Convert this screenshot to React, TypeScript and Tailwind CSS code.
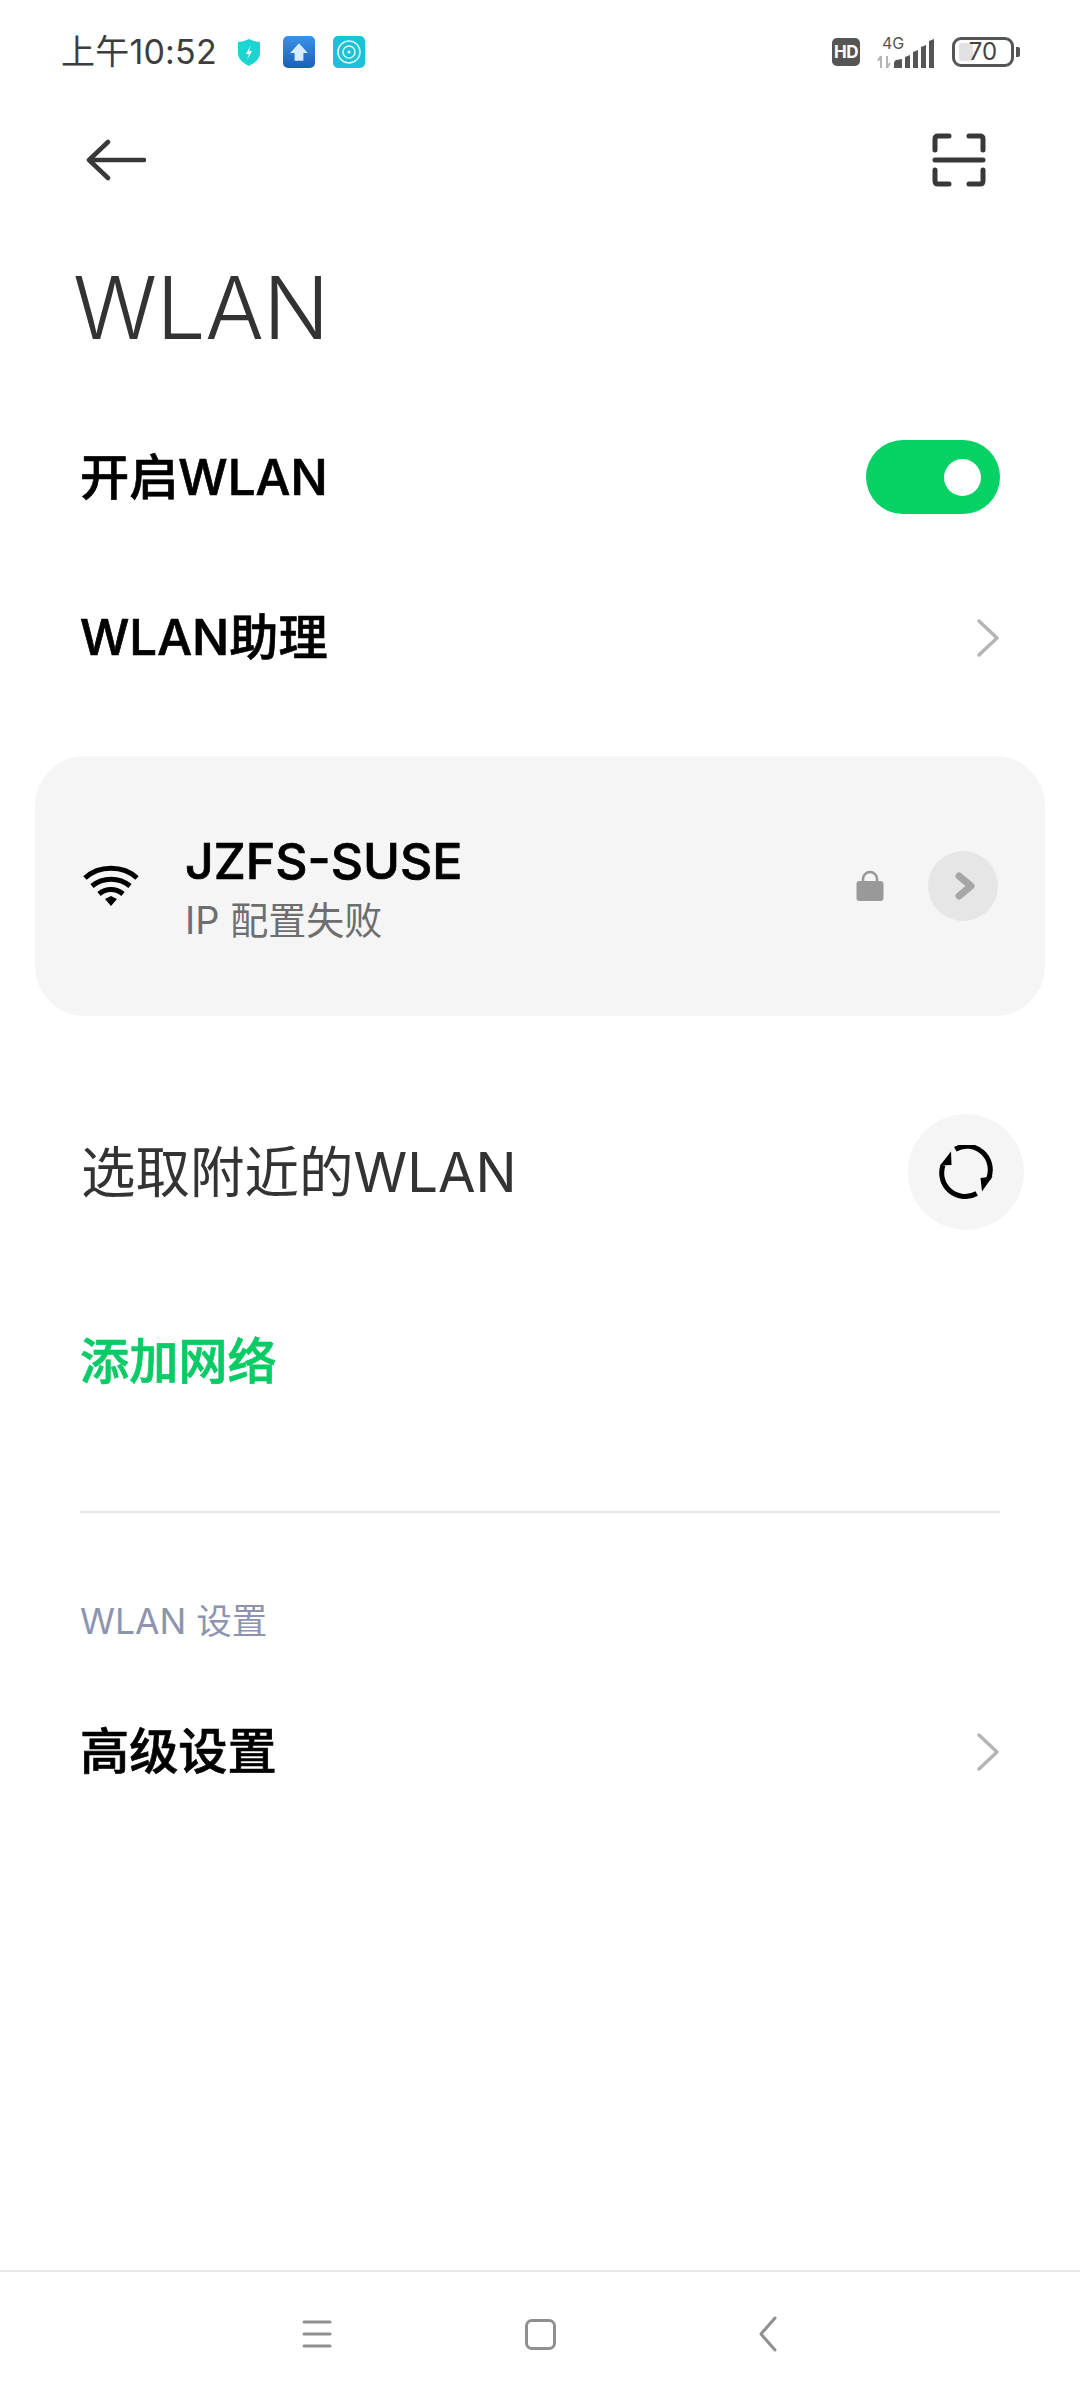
import * as React from "react"

const FONT = "font-['Inter','Noto_Sans_CJK_SC',sans-serif]"

function Chevron() {
  return (
    <svg width="24" height="38" viewBox="0 0 24 38" fill="none" stroke="#b5b5b5" strokeWidth="3.5" strokeLinecap="round" strokeLinejoin="round">
      <path d="M3 2l18 17L3 36" />
    </svg>
  )
}

function StatusBar() {
  return (
    <div className="flex h-[104px] shrink-0 items-center justify-between pl-[61px] pr-[60px]">
      <div className="flex items-center">
        <span className="w-[172px] text-[34px] leading-none tracking-[0.2px] text-[#3d3d3d]">上午10:52</span>
        <svg width="32" height="32" viewBox="0 0 32 32" className="mr-[18px]">
          <path d="M16 3c4 2 8 3 11 3v11c0 6-5 10-11 13C10 27 5 23 5 17V6c3 0 7-1 11-3z" fill="#1cd4d4" />
          <path d="M18 9l-5 9h3l-2 6 5-9h-3z" fill="#fff" />
        </svg>
        <div className="mr-[18px] flex size-8 items-center justify-center rounded-[5px] bg-gradient-to-b from-[#3a93e8] to-[#1b5fb8]">
          <svg width="22" height="22" viewBox="0 0 20 20">
            <path d="M10 2l8 9h-4v7H6v-7H2z" fill="#d6ecff" />
          </svg>
        </div>
        <div className="flex size-8 items-center justify-center rounded-[5px] bg-[#1bc1d4]">
          <svg width="28" height="28" viewBox="0 0 28 28" fill="none" stroke="#d9f6fa" strokeWidth="1.6">
            <circle cx="14" cy="14" r="11" />
            <circle cx="14" cy="14" r="6" />
            <circle cx="14" cy="14" r="1.6" fill="#d9f6fa" stroke="none" />
          </svg>
        </div>
      </div>
      <div className="flex items-center">
        <div className="mr-[14px] flex h-7 w-7 items-center justify-center rounded-[5px] bg-[#555] text-[17px] font-bold leading-none tracking-[-0.5px] text-white">
          HD
        </div>
        <div className="relative mr-[16px] h-[36px] w-[62px]">
          <span className="absolute left-[8px] top-[1px] text-[16px] leading-none text-[#555]">4G</span>
          <svg width="62" height="36" viewBox="0 0 62 36" className="block">
            <path d="M7 34V22M7 22l-3 5M13 22v12M13 34l3-5" stroke="#b5b5b5" strokeWidth="2" fill="none" />
            <path d="M20 34v-5q0-2 2-3l6-1v9zM31 34V23l5-2v13zM39 34V18l5-2v18zM47 34V13l5-2v23zM55 34V7l5-2v29z" fill="#555" />
          </svg>
        </div>
        <div className="relative flex h-[30px] w-[62px] items-center justify-center rounded-[9px] border-[3px] border-[#555]">
          <div className="absolute bottom-[3px] left-[4px] top-[3px] w-[14px] rounded-[2px] bg-[#e2e2e2]" />
          <span className="relative text-[24px] leading-none text-[#444]">70</span>
        </div>
        <div className="ml-[2px] h-[10px] w-[4px] rounded-r-[2px] bg-[#555]" />
      </div>
    </div>
  )
}

function Row({ label, color = "text-black", children }: { label: string; color?: string; children?: React.ReactNode }) {
  return (
    <div className="flex h-[160px] shrink-0 items-center justify-between pl-[80px] pr-[80px]">
      <span className={`text-[49.2px] font-medium leading-none [-webkit-text-stroke:0.7px] ${color}`}>{label}</span>
      {children}
    </div>
  )
}

export default function App() {
  return (
    <div className={`flex h-[2400px] w-[1080px] flex-col bg-white ${FONT}`}>
      <StatusBar />

      <div className="flex h-[112px] shrink-0 items-center justify-between pl-[86px] pr-[94px]">
        <svg width="60" height="42" viewBox="0 0 60 42" fill="none" stroke="#383838" strokeWidth="4.5" strokeLinecap="round" strokeLinejoin="round">
          <path d="M22 3L3 21l19 18M3 21h55" />
        </svg>
        <svg width="54" height="54" viewBox="0 0 54 54" fill="none" stroke="#383838" strokeWidth="5" strokeLinecap="round" strokeLinejoin="round">
          <path d="M17 3H6Q3 3 3 6v11M37 3h11q3 0 3 3v11M3 27h48M3 37v11q0 3 3 3h11M51 37v11q0 3-3 3H37" />
        </svg>
      </div>

      <div className="flex h-[182px] shrink-0 items-center pl-[73px]">
        <span className="text-[87px] font-[270] leading-none tracking-[-0.5px] text-[#333]">WLAN</span>
      </div>

      <Row label="开启WLAN">
        <div className="-mt-[2px] flex h-[74px] w-[134px] items-center justify-end rounded-[37px] bg-[#05d165] pr-[19px]">
          <div className="size-[37px] rounded-full bg-white" />
        </div>
      </Row>
      <Row label="WLAN助理">
        <Chevron />
      </Row>

      <div className="mx-[35px] mt-[38px] flex h-[260px] shrink-0 items-center rounded-[50px] bg-[#f5f5f5] pl-[48px] pr-[47px]">
        <svg width="56" height="42" viewBox="0 0 56 42" fill="none" stroke="#000" strokeWidth="5">
          <path d="M2 13C16 0 40 0 54 13M9 21c11-9 27-9 38 0M16 29c7-6 17-6 24 0" />
          <path d="M22 34l6-3 6 3-6 7z" fill="#000" stroke="none" />
        </svg>
        <div className="ml-[46px] flex flex-col pt-[4px]">
          <span className="text-[50px] font-medium leading-[64px] text-black [-webkit-text-stroke:0.7px]">JZFS-SUSE</span>
          <span className="text-[38px] leading-[54px] text-[#6e6e6e]">IP 配置失败</span>
        </div>
        <div className="ml-auto flex items-center">
          <svg width="28" height="32" viewBox="0 0 28 32" className="mr-[44px]">
            <path d="M7 13V9a7 7 0 0 1 14 0v4" fill="none" stroke="#999" strokeWidth="2.6" />
            <rect x="0.5" y="11" width="27" height="20" rx="3" fill="#999" />
          </svg>
          <div className="flex size-[70px] items-center justify-center rounded-full bg-[#e6e6e6] pl-[3px]">
            <svg width="22" height="30" viewBox="0 0 22 30" fill="none" stroke="#a6a6a6" strokeWidth="7" strokeLinecap="round" strokeLinejoin="round">
              <path d="M5 5l12 10L5 25" />
            </svg>
          </div>
        </div>
      </div>

      <div className="mt-[98px] flex h-[116px] shrink-0 items-center justify-between pl-[81px] pr-[56px]">
        <span className="text-[54.5px] leading-none text-[#333]">选取附近的WLAN</span>
        <div className="flex size-[116px] items-center justify-center rounded-full bg-[#f5f5f5]">
          <svg width="54" height="54" viewBox="0 0 54 54" fill="none" stroke="#000" strokeWidth="5">
            <path d="M16.3 4.2A23.5 23.5 0 0 1 49.5 33.7M37.7 48.5A23.5 23.5 0 0 1 4 20.3" />
            <path d="M41.5 33L53.5 31.5 43 46.5zM12 6.5L12.5 20 1 20.5z" fill="#000" stroke="none" />
          </svg>
        </div>
      </div>

      <div className="mt-[52px]">
        <Row label="添加网络" color="text-[#0acb66]" />
      </div>

      <div className="mx-[80px] mt-[69px] h-[2px] shrink-0 bg-[#e5e5e5]" />

      <div className="mt-[91px] pl-[80px] text-[35.5px] leading-none text-[#8e94b0]">WLAN 设置</div>

      <div className="mt-[32px]">
        <Row label="高级设置">
          <Chevron />
        </Row>
      </div>

      <div className="mt-auto flex h-[130px] shrink-0 items-center border-t-2 border-[#e8e8e8] pb-[4px] pl-[302px]">
        <svg width="30" height="30" viewBox="0 0 30 30" stroke="#8f8f8f" strokeWidth="3" strokeLinecap="round" className="mr-[193px]">
          <path d="M2 3h26M2 15h26M2 27h26" />
        </svg>
        <div className="mr-[203px] size-[31px] rounded-[7px] border-[3px] border-[#8f8f8f]" />
        <svg width="18" height="36" viewBox="0 0 18 36" fill="none" stroke="#8f8f8f" strokeWidth="3" strokeLinecap="round" strokeLinejoin="round">
          <path d="M16 2L2 18l14 16" />
        </svg>
      </div>
    </div>
  )
}
